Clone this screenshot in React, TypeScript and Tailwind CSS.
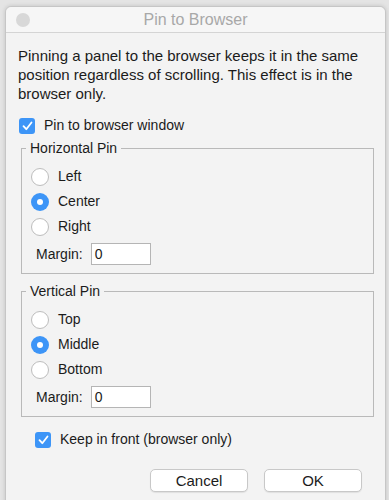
import React from 'react';

const font = { fontFamily: '"Liberation Sans", Arial, sans-serif' };

const Check: React.FC<{ label: string; className?: string }> = ({ label, className }) => (
  <label className={`flex items-center gap-[9px] ${className ?? ''}`}>
    <span className="flex h-[16px] w-[16px] items-center justify-center rounded-[3px] bg-[#3d95f7]">
      <svg width="11" height="10" viewBox="0 0 11 10" fill="none">
        <path d="M1.5 5.2 L4.3 8.2 L9.5 1.5" stroke="white" strokeWidth="1.8" strokeLinecap="round" strokeLinejoin="round" />
      </svg>
    </span>
    <span>{label}</span>
  </label>
);

const Radio: React.FC<{ label: string; on?: boolean }> = ({ label, on }) => (
  <div className="flex h-[25px] items-center gap-[9px]">
    {on ? (
      <span className="flex h-[18px] w-[18px] items-center justify-center rounded-full bg-[#3d95f7]">
        <span className="h-[6px] w-[6px] rounded-full bg-white" />
      </span>
    ) : (
      <span className="h-[18px] w-[18px] rounded-full border border-[#bdbdbd] bg-white" />
    )}
    <span>{label}</span>
  </div>
);

const PinGroup: React.FC<{ title: string; options: string[]; selected: string }> = ({ title, options, selected }) => (
  <fieldset className="ml-[15px] w-[353px] border border-[#b9b9b9] pb-[8px]">
    <legend className="ml-[4px] px-[4px] leading-[18px]">{title}</legend>
    <div className="mt-[7px] flex flex-col px-[9px]">
      {options.map((o) => (
        <Radio key={o} label={o} on={o === selected} />
      ))}
    </div>
    <div className="mt-[4px] flex items-center gap-[8px] pl-[14px]">
      <span>Margin:</span>
      <div className="flex h-[22px] w-[60px] items-center border border-[#b5b5b5] bg-white pl-[3px]">0</div>
    </div>
  </fieldset>
);

export default function App() {
  return (
    <div className="h-[500px] overflow-hidden bg-[#e4e4e4] pt-[6px] text-[14px] text-[#1b1b1b]" style={font}>
      <div className="ml-[5px] h-[520px] w-[381px] rounded-t-[6px] border border-[#c6c6c6] bg-[#f3f3f3] shadow-[0_0_4px_rgba(0,0,0,0.15)]">
        {/* title bar */}
        <div className="relative flex h-[26px] items-center justify-center rounded-t-[6px] border-b border-[#d4d4d4] bg-[#f6f6f6]">
          <span className="absolute left-[10px] top-[6px] h-[14px] w-[14px] rounded-full bg-[#d8d8d8]" />
          <span className="text-[16px] text-[#a8a8a8]">Pin to Browser</span>
        </div>

        <p className="mt-[13px] w-[375px] pl-[12px] text-[15px] leading-[19px]">
          Pinning a panel to the browser keeps it in the same position regardless of scrolling. This effect is in the browser only.
        </p>

        <Check label="Pin to browser window" className="ml-[13px] mt-[12px]" />

        <div className="mt-[3px] flex flex-col gap-[8px]">
          <PinGroup title="Horizontal Pin" options={['Left', 'Center', 'Right']} selected="Center" />
          <PinGroup title="Vertical Pin" options={['Top', 'Middle', 'Bottom']} selected="Middle" />
        </div>

        <Check label="Keep in front (browser only)" className="ml-[29px] mt-[12px]" />

        <div className="mt-[19px] flex justify-end gap-[16px] pr-[23px]">
          <button className="h-[23px] w-[98px] rounded-[5px] border border-[#c8c8c8] bg-white text-[15px] shadow-[0_1px_1px_rgba(0,0,0,0.08)]">Cancel</button>
          <button className="h-[23px] w-[98px] rounded-[5px] border border-[#c8c8c8] bg-white text-[15px] shadow-[0_1px_1px_rgba(0,0,0,0.08)]">OK</button>
        </div>
      </div>
    </div>
  );
}
